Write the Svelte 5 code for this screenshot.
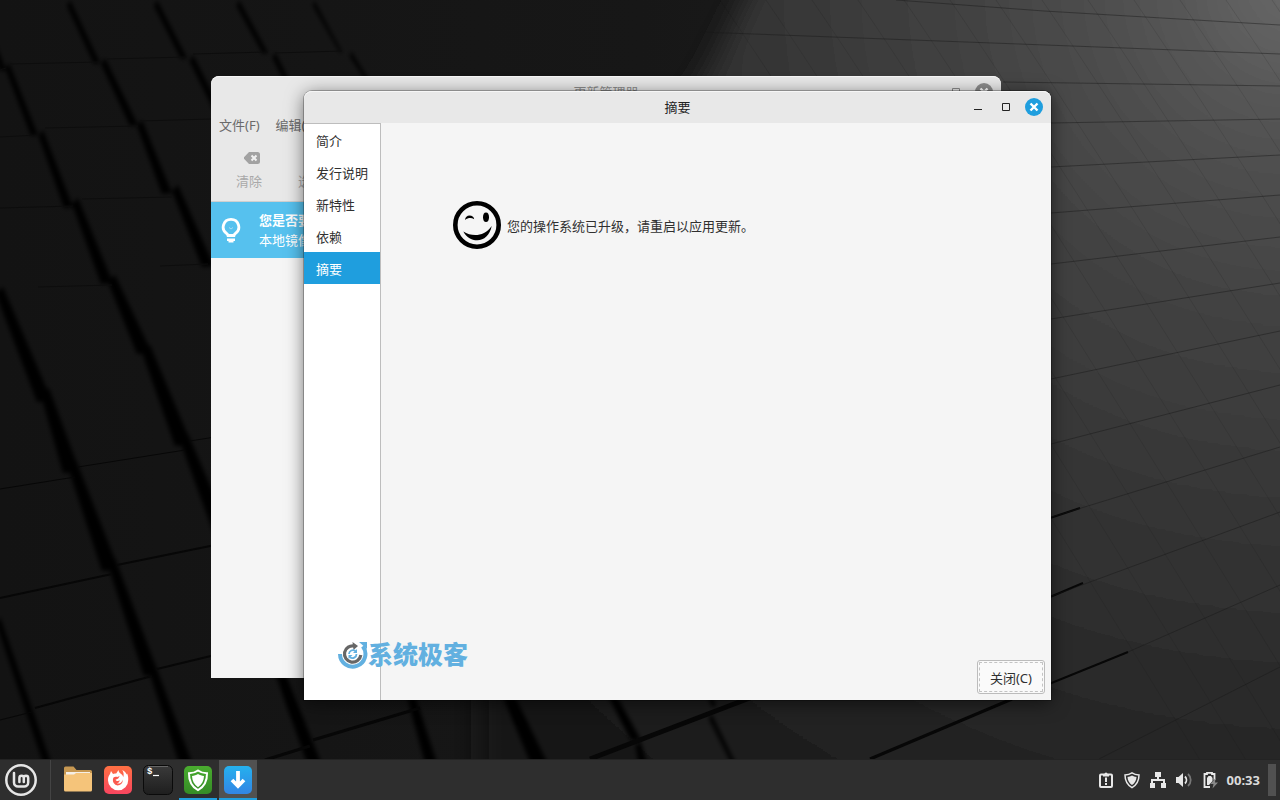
<script lang="ts">
	const pages = ['简介', '发行说明', '新特性', '依赖', '摘要'];
	let current = $state('摘要');

	// shadow teeth: x1, y1, x2, y2, width at the lower end
	const teeth = [
		[70, 0, 100, 63, 6], [105, 58, 138, 125, 8], [142, 120, 172, 193, 10], [178, 185, 214, 266, 12],
		[-6, 40, 6, 70, 6], [9, 63, 38, 135, 7], [43, 130, 73, 207, 9], [78, 198, 113, 283, 12],
		[115, 275, 152, 353, 15], [150, 345, 192, 445, 17], [188, 434, 232, 536, 17],
		[3, 287, 52, 401, 15], [49, 388, 80, 472, 17], [76, 460, 119, 570, 17],
		[115, 558, 159, 675, 15], [155, 664, 194, 768, 13], [0, 617, 53, 768, 8],
		[157, 0, 187, 58, 6], [193, 55, 222, 112, 7], [239, 0, 268, 53, 5], [275, 52, 298, 98, 5],
		[314, 0, 342, 52, 2], [351, 51, 375, 90, 2], [276, 650, 322, 765, 14],
		[410, 680, 438, 766, 12], [507, 680, 549, 766, 17], [608, 680, 641, 740, 10],
		[640, 740, 648, 766, 9], [711, 713, 737, 766, 4], [706, 680, 716, 706, 4]
	];

	// steps between the dark tiles: x1, y1, x2, y2, line width
	const steps = [
		[0, 489, 75, 477, 1], [78, 467, 185, 450, 1], [190, 441, 215, 437, 1],
		[0, 598, 112, 574, 2], [117, 565, 215, 545, 2], [35, 708, 152, 676, 2], [157, 669, 215, 655, 2],
		[0, 720, 32, 712, 1], [313, 740, 420, 708, 3], [265, 760, 310, 746, 3],
		[590, 759, 755, 696, 5], [870, 759, 1012, 699, 3], [1012, 699, 1128, 652, 2],
		[1050, 518, 1080, 508, 2], [1050, 597, 1083, 583, 2]
	];

	// upper edges of the far tiles: x, y, end x
	const ledges = [
		[0, 137, 38], [0, 208, 73], [38, 287, 112], [0, 70, 6], [10, 64, 100], [107, 59, 187],
		[45, 128, 138], [140, 121, 211], [82, 199, 172], [160, 266, 208], [193, 54, 268], [275, 53, 342]
	];

	// joints of the light tiles
	const joints = [
		'896,0 1044,11 1280,25', '700,32 1072,46 1280,54', '1003,82 1280,86', '1051,123 1280,119',
		'1051,167 1280,155', '1051,213 1280,195', '1051,264 1280,237', '1051,319 1280,283',
		'1051,379 1280,331', '1051,444 1280,385', '1052,517 1280,447', '1052,596 1280,512',
		'1128,652 1280,585', '1099,759 1280,667'
	];
	const seams = Array.from({ length: 16 }, (_, i) => 520 + i * 46);
</script>

<div class="desktop">
	<svg class="wallpaper" viewBox="0 0 1280 800" preserveAspectRatio="xMidYMid slice" aria-hidden="true">
		<defs>
			<linearGradient id="base" x1="0" y1="0" x2="1" y2="0">
				<stop offset="0" stop-color="#131313" />
				<stop offset="0.5" stop-color="#171717" />
				<stop offset="1" stop-color="#202020" />
			</linearGradient>
			<radialGradient id="light" gradientUnits="userSpaceOnUse" cx="1290" cy="-10" r="1060">
				<stop offset="0" stop-color="#686868" />
				<stop offset="0.12" stop-color="#545454" />
				<stop offset="0.28" stop-color="#444" />
				<stop offset="0.5" stop-color="#353535" />
				<stop offset="0.75" stop-color="#252525" />
				<stop offset="1" stop-color="#161616" />
			</radialGradient>
			<filter id="wide"><feGaussianBlur stdDeviation="14" /></filter>
			<filter id="soft"><feGaussianBlur stdDeviation="2" /></filter>
		</defs>
		<rect width="1280" height="800" fill="url(#base)" />
		<path d="M775-60H1400V860H480V400L705 76Z" fill="url(#light)" filter="url(#wide)" />
		<g filter="url(#soft)" fill="#030303">
			{#each teeth as [x1, y1, x2, y2, w]}
				<path d="M{x1} {y1}L{x2} {y2}L{x2 - w} {y2 + 1}L{x1 - w / 2} {y1 + 6}Z" />
			{/each}
		</g>
		{#each steps as [x1, y1, x2, y2, w]}
			<path d="M{x1} {y1}L{x2} {y2}" stroke="#070707" stroke-width={w} />
		{/each}
		{#each ledges as [x, y, end]}
			<path d="M{x} {y}L{end} {y - 2}" stroke="#0d0d0d" />
		{/each}
		{#each joints as points}
			<polyline {points} fill="none" stroke="#181818" stroke-opacity="0.45" />
		{/each}
		{#each seams as x}
			<path d="M{x + 200} 0Q{x + 330} 190 {x + 680} 760" fill="none" stroke="#111" stroke-opacity="0.12" />
		{/each}
	</svg>

	<main class="workspace">
		<section class="window manager" aria-label="更新管理器">
			<header class="titlebar">
				<h2>更新管理器</h2>
				<div class="controls">
					<button aria-label="最小化"><svg viewBox="0 0 18 18"><path d="M5 12.5h8" stroke="currentColor" /></svg></button>
					<button aria-label="最大化"><svg viewBox="0 0 18 18"><path d="M5.5 5.5h7v7h-7z" fill="none" stroke="currentColor" /></svg></button>
					<button class="close" aria-label="关闭"><svg viewBox="0 0 18 18"><path d="M5.5 5.5l7 7m0-7l-7 7" stroke="#fff" stroke-width="2.4" /></svg></button>
				</div>
			</header>
			<nav class="menubar">
				<button>文件(F)</button>
				<button>编辑(E)</button>
			</nav>
			<div class="toolbar">
				<button disabled>
					<svg viewBox="-6 0 22 12" width="22" height="12">
						<path d="M5 0h8.5a2.5 2.5 0 0 1 2.5 2.5v7a2.5 2.5 0 0 1-2.5 2.5H5L0 6.8V5.2z" fill="#a2a2a2" />
						<path d="M7.5 3.5l5 5m0-5l-5 5" stroke="#f0f0f0" stroke-width="2" />
					</svg>
					清除
				</button>
				<button disabled>
					<svg viewBox="0 0 12 12" width="12" height="12"></svg>
					选
				</button>
			</div>
			<div class="infobar">
				<svg viewBox="0 0 20 26" width="20" height="26">
					<path d="M10 2.4a7.7 7.7 0 0 0-4.5 14c.9.7 1.3 1.3 1.5 2.1h6c.2-.8.6-1.4 1.5-2.1a7.7 7.7 0 0 0-4.5-14z" fill="none" stroke="#fff" stroke-width="2.8" />
					<path d="M6 21.5h8V24h-1.500v1.500h-5V24H6z" fill="#fff" />
					<path d="M8 10.5l2 1.5 2-1.5" fill="none" stroke="#a5dcf5" />
				</svg>
				<div>
					<strong>您是否要</strong>
					<p>本地镜像</p>
				</div>
			</div>
		</section>

		<section class="window dialog" role="dialog" aria-labelledby="dialog-title">
			<header class="titlebar">
				<h1 id="dialog-title">摘要</h1>
				<div class="controls">
					<button aria-label="最小化"><svg viewBox="0 0 18 18"><path d="M5 11.5h8" stroke="currentColor" /></svg></button>
					<button aria-label="最大化"><svg viewBox="0 0 18 18"><path d="M5.5 5.5h7v7h-7z" fill="none" stroke="currentColor" /></svg></button>
					<button class="close" aria-label="关闭"><svg viewBox="0 0 18 18"><path d="M5.5 5.5l7 7m0-7l-7 7" stroke="#fff" stroke-width="2.4" /></svg></button>
				</div>
			</header>
			<div class="body">
				<nav class="pages">
					{#each pages as page}
						<button class:selected={page === current} onclick={() => (current = page)}>{page}</button>
					{/each}
				</nav>
				<div class="content">
					<div class="message">
						<svg viewBox="0 0 48 48" width="48" height="48" aria-hidden="true">
							<circle cx="24" cy="24" r="21.7" fill="none" stroke="#000" stroke-width="4.6" />
							<path d="M12 19c.3-3 2-4.5 4.600-4.500 2.500 0 4.100 1.200 4.600 3.700-3-1.700-6-1.500-9.200.8z" />
							<ellipse cx="33" cy="16.3" rx="3" ry="4.7" />
							<path d="M10.3 30.5C19 36 31 36 38.7 25 37 34 31 39.3 24.3 39.3c-6 0-11-3.300-14-8.800z" />
						</svg>
						<p>您的操作系统已升级，请重启以应用更新。</p>
					</div>
					<footer><button class="action">关闭(C)</button></footer>
				</div>
			</div>
			<div class="brand">
				<svg viewBox="0 0 30 28" width="30" height="28" aria-hidden="true">
					<g fill="none">
						<path d="M2 13a12.700 12.700 0 1 0 22.800-7.800" stroke="#62b0e0" stroke-width="4" />
						<path d="M21 1h8v7z" fill="#62b0e0" />
						<path d="M16.500 5a8.200 8.200 0 1 0 6.300 9" stroke="#666" stroke-width="3.200" />
						<path d="M14.500 1l5.500 4-4.500 4z" fill="#666" />
						<path d="M11 13a4 4 0 0 1 6.500-3M18.500 13a4 4 0 0 1-6.500 3.200" stroke="#62b0e0" stroke-width="1.800" />
						<path d="M19 8v4h-4zM10.500 18v-4h4z" fill="#62b0e0" />
					</g>
				</svg>
				<span>系统极客</span>
			</div>
		</section>
	</main>

	<footer class="panel">
		<button class="menu" aria-label="菜单">
			<svg viewBox="0 0 32 32" width="32" height="32" fill="none" stroke="#e6e6e6">
				<circle cx="16" cy="16" r="14.700" stroke-width="2.500" />
				<path d="M9 9v9.500a4 4 0 0 0 4 4h6.200a4 4 0 0 0 4-4V14a2.200 2.200 0 0 0-4.400 0v4M18.800 14a2.200 2.200 0 0 0-4.400 0v4" stroke-width="2.500" stroke-linecap="round" />
			</svg>
		</button>
		<nav class="tasks">
			<button aria-label="文件">
				<svg viewBox="0 0 28 28" width="28" height="28">
					<path d="M0 2a1.500 1.500 0 0 1 1.500-1.500h8l3 3.500H26.500A1.500 1.500 0 0 1 28 5.500V12H0z" fill="#c79852" />
					<path d="M2 6h24v4H2z" fill="#f5efe6" />
					<path d="M0 8.500h10l2-1.500h16V24a1.500 1.500 0 0 1-1.500 1.500h-25A1.500 1.500 0 0 1 0 24z" fill="#f5c47a" />
				</svg>
			</button>
			<button aria-label="Firefox">
				<svg viewBox="0 0 28 28" width="28" height="28">
					<defs><linearGradient id="fox" x2="0" y2="1"><stop stop-color="#ff7043" /><stop offset="1" stop-color="#f8455f" /></linearGradient></defs>
					<rect width="28" height="28" rx="5" fill="url(#fox)" />
					<path d="M6 8l1-3 2 3c1-.6 2-.8 3.200-.4L14.500 4c.2 1.800 1 2.800 2.300 3.800 1.500 1 2.200 2 2.400 3.400.9-2.200.5-4.700-.9-7.200 2.300 1 3.700 2.800 4.400 4.500l.4-1c1 2 1.300 4.300 1.100 6.500A10 10 0 0 1 4 14.500C3.900 12 4.500 9.700 6 8z" fill="#fff" />
					<path d="M9.500 11.500c1.200-1 2.500-1 3.800-.6l2.400-.9-1.500 2.500-2.700 1.200c.8 1.400 2.700 1.700 4.300.5-.4 2-1.500 2.800-3 2.800 2.800 1.500 5.700-.5 5.700-3.500a4.800 4.800 0 0 1-8.800 3.500c-1-1.600-1.100-3.700-.2-5.500z" fill="#fb5a4f" />
				</svg>
			</button>
			<button aria-label="终端">
				<svg class="terminal" viewBox="0 0 28 28" width="28" height="28">
					<defs><linearGradient id="term" x2="0" y2="1"><stop stop-color="#3a3a3a" /><stop offset="1" stop-color="#1e1e1e" /></linearGradient></defs>
					<rect x="-.5" y="-.5" width="29" height="29" rx="5" fill="url(#term)" stroke="#0a0a0a" />
					<path d="M4 .5h20" stroke="#666" />
					<text x="3" y="8" class="prompt">$</text>
					<path d="M9 9.500h6" stroke="#fff" stroke-width="1.200" />
				</svg>
			</button>
			<button class="open" aria-label="更新管理器">
				<svg viewBox="0 0 28 28" width="28" height="28">
					<defs><linearGradient id="leaf" x2="0" y2="1"><stop stop-color="#4aac2f" /><stop offset="1" stop-color="#358c26" /></linearGradient></defs>
					<rect width="28" height="28" rx="5" fill="url(#leaf)" />
					<path d="M14 4.500c2.500 1.800 5.500 2.700 9 2.700.2 7.300-2.500 13.300-9 17-6.500-3.700-9.200-9.700-9-17 3.500 0 6.500-.9 9-2.700z" fill="none" stroke="#fff" stroke-width="2" />
					<path d="M14 8c1.800 1.200 3.700 1.800 6 2-.2 5-2.200 8.700-6 11.200C10.200 18.700 8.200 15 8 10c2.300-.2 4.200-.8 6-2z" fill="#fff" />
				</svg>
			</button>
			<button class="open active" aria-label="升级工具">
				<svg viewBox="0 0 28 28" width="28" height="28">
					<defs><linearGradient id="sky" x2="0" y2="1"><stop stop-color="#25b1ee" /><stop offset="1" stop-color="#3285e4" /></linearGradient></defs>
					<rect width="28" height="28" rx="5" fill="url(#sky)" />
					<path d="M14 5v15M8 14l6 6 6-6" fill="none" stroke="#fff" stroke-width="3.800" />
				</svg>
			</button>
		</nav>
		<div class="tray">
			<button aria-label="报告">
				<svg viewBox="0 0 18 18" width="18" height="18">
					<rect x="3" y="3.500" width="12" height="12.500" rx="1" fill="none" stroke="#e8e8e8" stroke-width="2" />
					<path d="M6 3h1.500a1.500 1.500 0 0 1 3 0H12v2.500H6z" fill="#e8e8e8" />
					<path d="M9 6.500v4.500M9 12v2" stroke="#e8e8e8" stroke-width="2" />
				</svg>
			</button>
			<button aria-label="更新">
				<svg viewBox="0 0 18 18" width="18" height="18">
					<path d="M9 1.800c2 1.300 4.300 2 7 2.200 0 5.500-2 9.700-7 12.700C4 13.700 2 9.500 2 4c2.700-.2 5-.9 7-2.200z" fill="none" stroke="#e8e8e8" stroke-width="1.500" />
					<path d="M9 4.500c1.400.9 2.800 1.300 4.500 1.500-.2 3.500-1.600 6-4.500 8-2.900-2-4.300-4.500-4.500-8C6.200 5.800 7.600 5.400 9 4.500z" fill="#e8e8e8" />
				</svg>
			</button>
			<button aria-label="网络">
				<svg viewBox="0 0 18 18" width="18" height="18" fill="#e8e8e8">
					<path d="M6 1h6v5h-2v2h6v4h1v5h-5v-5h2v-2H4v2h2v5H1v-5h1V8h6V6H6z" />
				</svg>
			</button>
			<button aria-label="音量">
				<svg viewBox="0 0 18 18" width="18" height="18">
					<path d="M1 6h2.500L8 2v14l-4.500-4H1z" fill="#e8e8e8" />
					<path d="M10 5.500a5 5 0 0 1 0 7" fill="none" stroke="#e8e8e8" stroke-width="1.800" />
					<path d="M13 3a8 8 0 0 1 0 12" fill="none" stroke="#777" stroke-width="1.800" />
				</svg>
			</button>
			<button aria-label="电源">
				<svg viewBox="0 0 18 18" width="18" height="18">
					<path d="M9 16H3.500V3H6V1.800h5V3h2.500v6" fill="none" stroke="#e8e8e8" stroke-width="1.800" />
					<path d="M6 7l1.500-2h2.500L11.500 7v3L8 14H6z" fill="#e8e8e8" />
					<path d="M14.500 7L9.500 13h3l-1 4.500L17 11.500h-3z" fill="#888" />
				</svg>
			</button>
			<time>00:33</time>
			<button class="show-desktop" aria-label="显示桌面"></button>
		</div>
	</footer>
</div>

<style>
	:global(body) {
		margin: 0;
		background: #131313;
	}

	.desktop {
		position: relative;
		min-height: 100vh;
		display: flex;
		flex-direction: column;
		overflow: hidden;
		font-family: "Noto Sans", "Noto Sans CJK SC", sans-serif;
		font-size: 13px;
		line-height: 20px;
		color: #303030;
	}

	.wallpaper {
		position: absolute;
		inset: 0;
		width: 100%;
		height: 100%;
	}

	.workspace {
		position: relative;
		flex: 1;
	}

	h1, h2, p {
		margin: 0;
		font-size: 13px;
		font-weight: 400;
	}

	button {
		border: none;
		background: none;
		padding: 0;
		font: inherit;
		color: inherit;
		white-space: nowrap;
	}

	svg { display: block; flex-shrink: 0; }

	.window {
		position: absolute;
		display: flex;
		flex-direction: column;
		background: #f5f5f5;
		border-radius: 8px 8px 0 0;
	}

	.manager {
		inset: 76px 279px 81px 211px;
		overflow: hidden;
	}

	.dialog {
		inset: 91px 229px 59px 304px;
		box-shadow: 0 0 0 1px rgba(0, 0, 0, 0.25), 0 3px 18px rgba(0, 0, 0, 0.55);
	}

	.titlebar {
		height: 32px;
		flex-shrink: 0;
		display: grid;
		grid-template-columns: 1fr auto 1fr;
		align-items: center;
		padding: 0 8px;
		background: #e8e8e8;
		border-radius: 8px 8px 0 0;
		box-shadow: inset 0 1px #f6f6f6;
	}

	.titlebar h1, .titlebar h2 { grid-column: 2; }
	.titlebar h1 { color: #222; }

	.controls {
		justify-self: end;
		display: flex;
		gap: 10px;
		color: #222;
	}

	.controls button {
		width: 18px;
		height: 18px;
		border-radius: 50%;
	}

	.close { background: #1f9ede; }

	.manager .titlebar { color: #8c8c8c; }
	.manager .controls { color: #8c8c8c; }
	.manager .close { background: #8c8c8c; }

	.menubar {
		display: flex;
		gap: 16px;
		padding: 7px 8px;
		background: #e8e8e8;
		color: #6a6a6a;
	}

	.toolbar {
		display: flex;
		gap: 19px;
		padding: 0 8px 10px;
		background: #e8e8e8;
		border-bottom: 1px solid #cfcfcf;
	}

	.toolbar button {
		display: flex;
		flex-direction: column;
		align-items: center;
		gap: 7px;
		padding-top: 10px;
		color: #a8a8a8;
	}

	.toolbar button:first-child { min-width: 60px; }

	.infobar {
		display: flex;
		align-items: center;
		gap: 18px;
		padding: 8px 10px;
		background: #56c1ee;
		color: #fff;
	}

	.infobar strong { display: block; }

	.body {
		flex: 1;
		display: flex;
	}

	.pages {
		display: flex;
		flex-direction: column;
		background: #fff;
		border-top: 1px solid #bdbdbd;
		border-right: 1px solid #bdbdbd;
	}

	.pages button {
		height: 32px;
		padding: 2px 12px 0;
		text-align: left;
	}

	.pages .selected {
		background: #1f9ede;
		color: #fff;
	}

	.content {
		flex: 1;
		display: flex;
		flex-direction: column;
		justify-content: space-between;
		padding: 78px 6px 6px 72px;
	}

	.message {
		display: flex;
		align-items: center;
		gap: 6px;
	}

	.message p { padding-top: 2px; }

	.content footer {
		display: flex;
		justify-content: flex-end;
	}

	.action {
		height: 34px;
		padding: 2px 12px 0;
		background: #fafafa;
		border: 1px solid #bcbcbc;
		border-radius: 3px;
		outline: 1px dashed #c4c4c4;
		outline-offset: -3px;
	}

	.brand {
		position: absolute;
		left: 34px;
		bottom: 31px;
		display: flex;
		align-items: flex-start;
		color: #62b0e0;
		font-family: "Noto Sans CJK SC", sans-serif;
		font-size: 25px;
		font-weight: 900;
		line-height: 24px;
	}

	.panel {
		position: relative;
		height: 40px;
		display: flex;
		background: #2e2e2e;
		border-top: 1px solid #232323;
	}

	.menu {
		padding: 0 13px 0 5px;
		border-right: 1px solid #444;
	}

	.tasks {
		display: flex;
		gap: 2px;
		padding-left: 8px;
	}

	.tasks button {
		width: 38px;
		display: flex;
		align-items: center;
		justify-content: center;
	}

	.tasks .open { box-shadow: inset 0 -2px #1f9ede; }
	.tasks .active { background: #515151; }

	.terminal { overflow: visible; }

	.prompt {
		font: bold 9px "Liberation Mono", monospace;
		fill: #fff;
	}

	.tray {
		margin-left: auto;
		display: flex;
		align-items: center;
		gap: 8px;
		padding-right: 4px;
	}

	.tray time {
		font-weight: 700;
		color: #dadada;
	}

	.show-desktop {
		width: 8px;
		height: 32px;
		background: #515151;
	}
</style>
